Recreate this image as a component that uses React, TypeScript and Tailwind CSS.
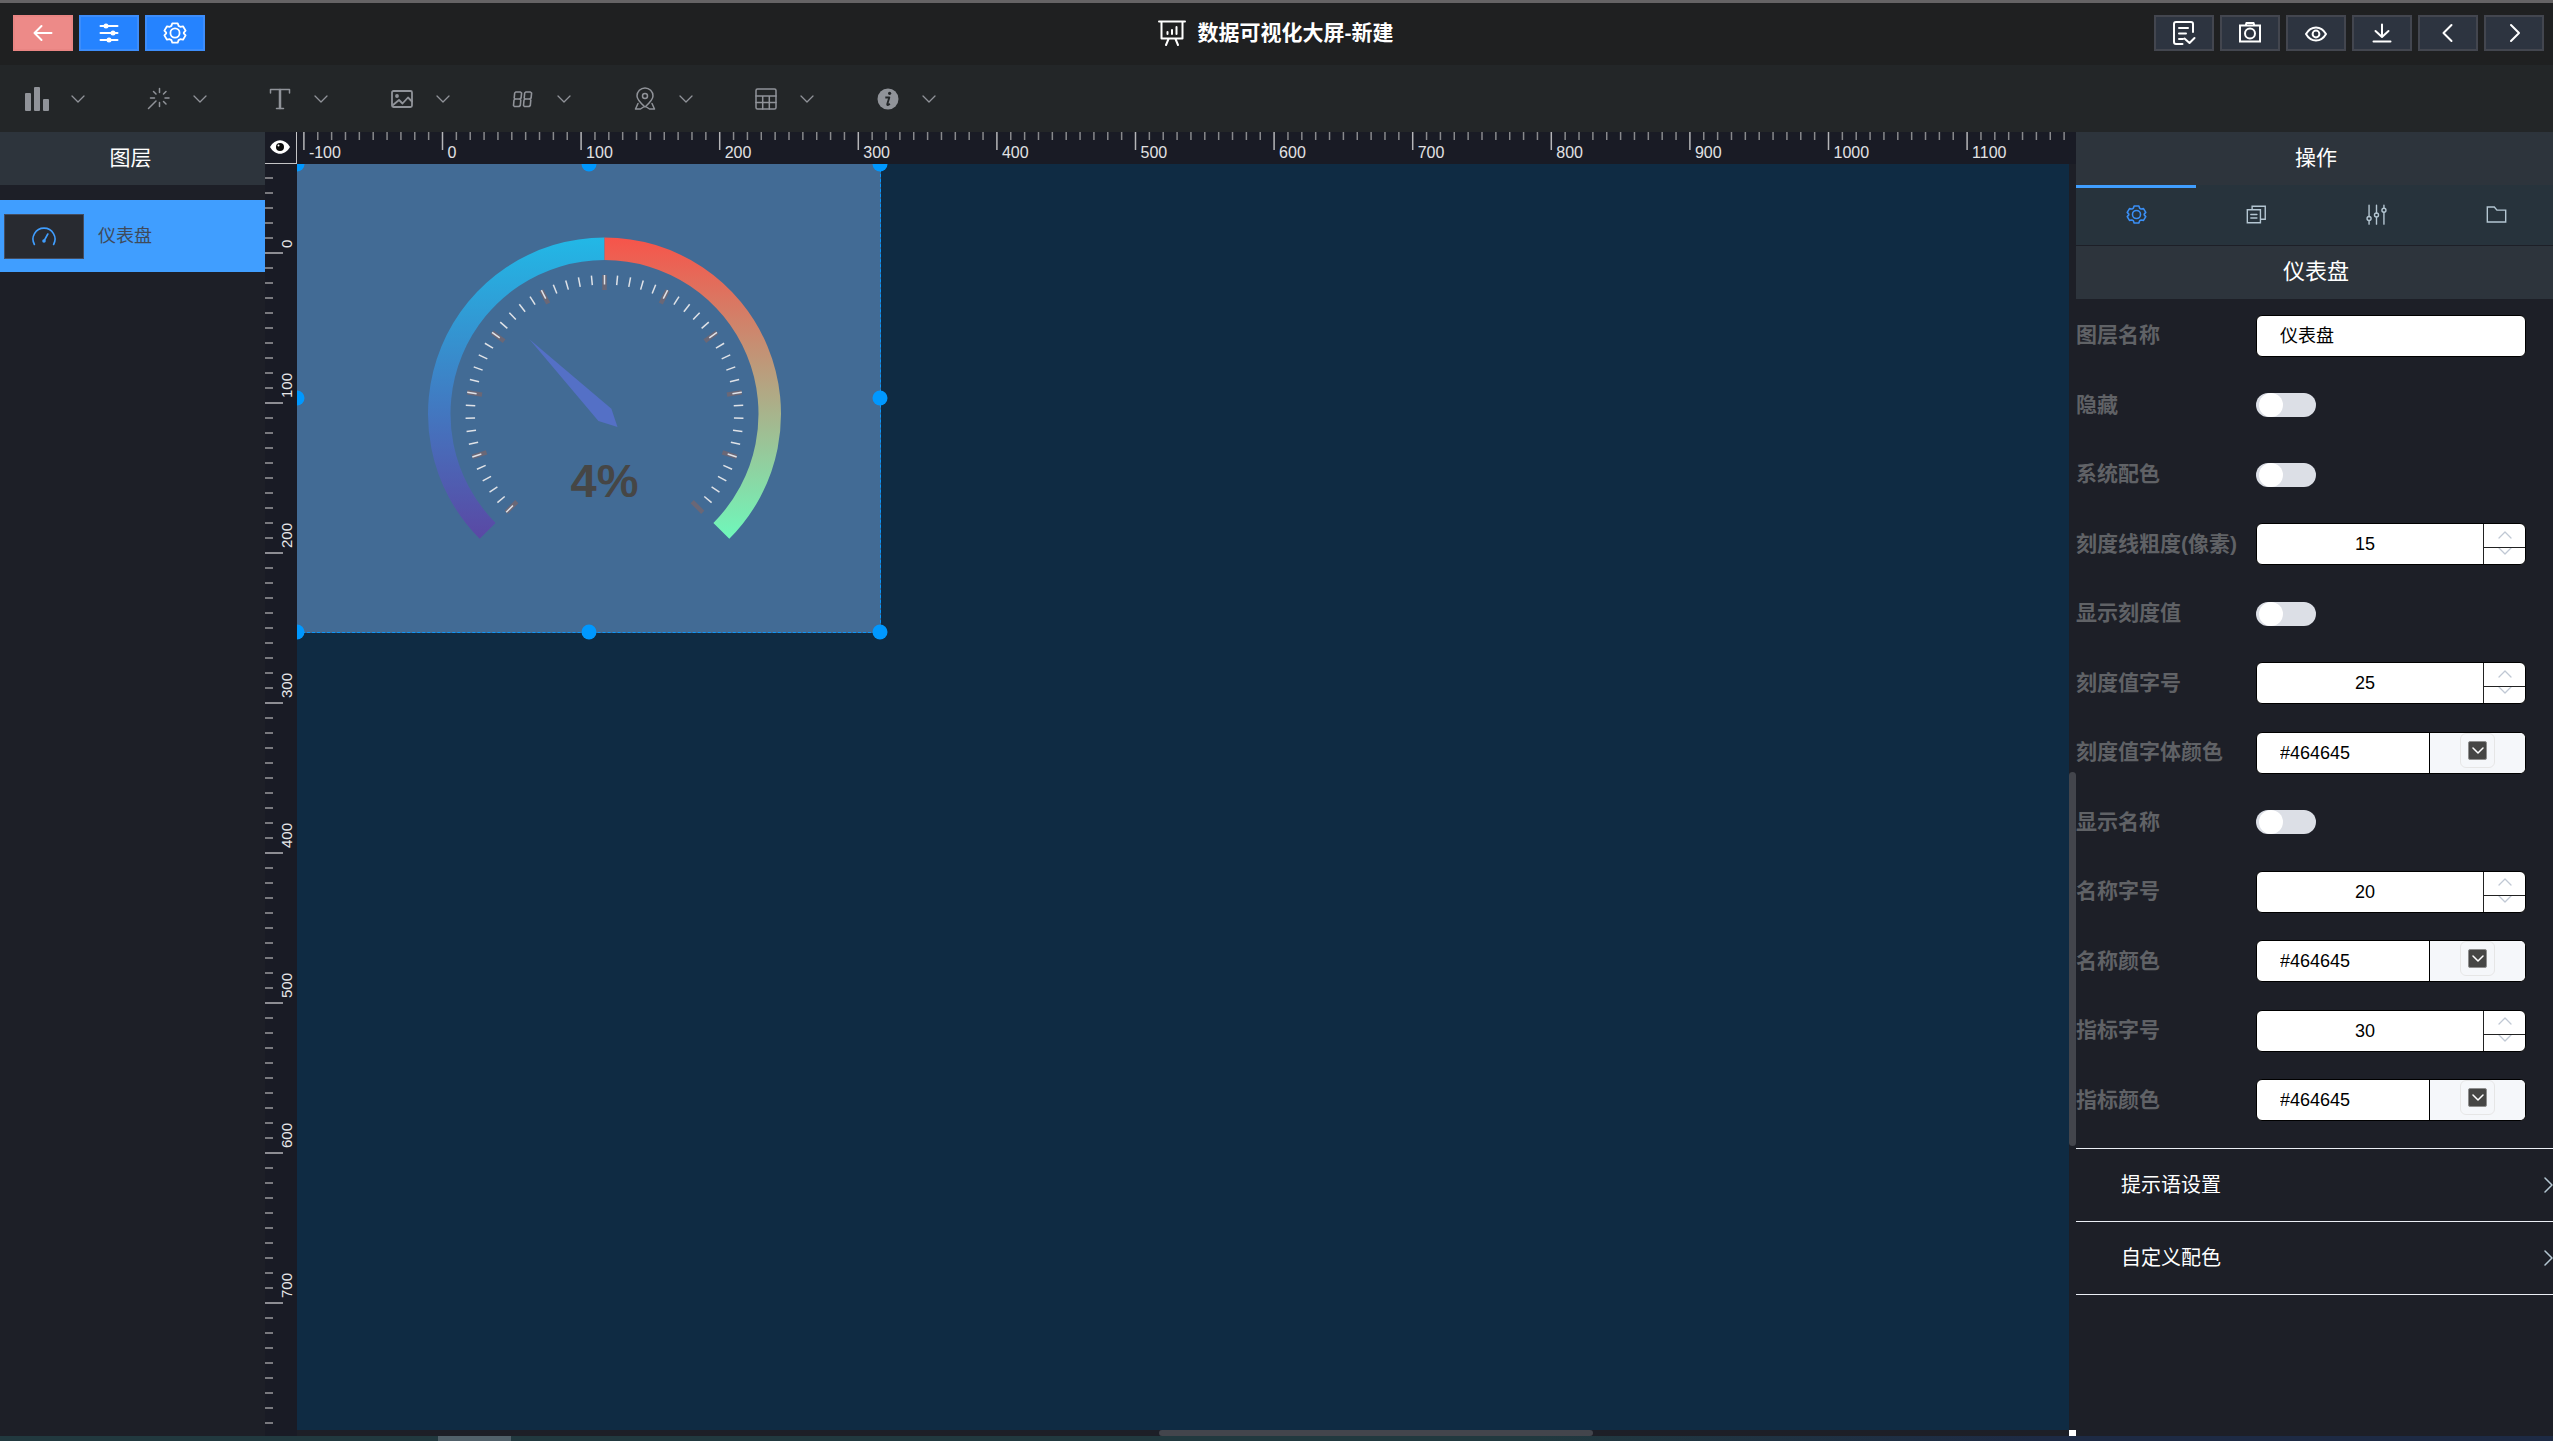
import React from "react";

const FONT = "font-['Liberation_Sans','Noto_Sans_CJK_SC',sans-serif]";

type IconProps = { className?: string; size?: number };

const stroke = {
  fill: "none",
  stroke: "currentColor",
  strokeLinecap: "round" as const,
  strokeLinejoin: "round" as const,
};

const Svg = ({ className = "", size = 24, w = 2, children }: { className?: string; size?: number; w?: number; children: React.ReactNode }) => (
  <svg className={className} width={size} height={size} viewBox="0 0 24 24" {...stroke} strokeWidth={w} aria-hidden="true">
    {children}
  </svg>
);

const BackIcon = () => <Svg><path d="M20.500 12H3.500M10.500 5L3.500 12l7 7" /></Svg>;

const OperationIcon = () => (
  <Svg>
    <path d="M3.500 5h17M3.500 12h17M3.500 19h17" />
    <g fill="currentColor" stroke="none">
      <circle cx="9" cy="5" r="2.500" />
      <circle cx="16" cy="12" r="2.500" />
      <circle cx="12" cy="19" r="2.500" />
    </g>
  </Svg>
);

const GearIcon = ({ className, size }: IconProps) => (
  <Svg className={className} size={size} w={1.8}>
    <path d="M9.300 2.300 L14.700 2.300 L15.600 4.900 L17.300 5.800 L20 5.300 L22.600 9.600 L20.800 11.600 L20.800 12.400 L22.600 14.400 L20 18.700 L17.300 18.200 L15.600 19.100 L14.700 21.700 L9.300 21.700 L8.400 19.100 L6.700 18.200 L4 18.700 L1.400 14.400 L3.200 12.400 L3.200 11.600 L1.400 9.600 L4 5.300 L6.700 5.800 L8.400 4.900 Z" />
    <circle cx="12" cy="12" r="4.600" />
  </Svg>
);

const BoardIcon = () => (
  <svg width="28" height="26" viewBox="0 0 28 26" {...stroke} strokeWidth="2" aria-hidden="true">
    <path d="M1 1.500h26M3.500 2v16.500h21V2M10.500 19l-2.500 6M17.500 19l2.500 6M9.500 12v2M14 10v4M18.500 7v7" />
  </svg>
);

const SaveIcon = () => (
  <Svg>
    <path d="M10.500 23H4a2 2 0 0 1-2-2V3a2 2 0 0 1 2-2h15a2 2 0 0 1 2 2v8M7 7h9M7 12.500h7M7 18h4M12.500 17.500l5 4.500 5-5" />
  </Svg>
);
const CameraIcon = () => (
  <Svg>
    <path d="M2 4.500h20v16H2zM7.500 4.500L8.500 2h7l1 2.500" strokeLinejoin="miter" />
    <circle cx="12" cy="12.500" r="5" />
  </Svg>
);
const ViewIcon = () => (
  <Svg>
    <path d="M2 13c2.500-4.300 6-6.500 10-6.500S19.500 8.700 22 13c-2.500 4.300-6 6.500-10 6.500S4.500 17.300 2 13z" />
    <circle cx="12" cy="13" r="3.400" />
  </Svg>
);
const DownloadIcon = () => <Svg><path d="M12 3.500v12M5.500 10l6.500 6 6.500-6M3.500 20.500h17" /></Svg>;
const PrevIcon = () => <Svg><path d="M15.500 4l-8 8 8 8" /></Svg>;
const NextIcon = () => <Svg><path d="M9 4l8 8-8 8" /></Svg>;

const BarsIcon = () => (
  <Svg>
    <g fill="currentColor" stroke="none">
      <rect x="0" y="6" width="6" height="18" rx="1" />
      <rect x="9" y="0" width="6" height="24" rx="1" />
      <rect x="18" y="12" width="6" height="12" rx="1" />
    </g>
  </Svg>
);
const WandIcon = () => (
  <Svg w={1.5}>
    <path d="M12.500 1.500v4M12.500 15.500v4M3.500 11h4M18 11h4M6.500 4.500l2.500 2.500M19 4.500l-2.500 2.500M16.500 14.500l2.500 2.500M9 14l-7.500 7.500" />
  </Svg>
);
const TextIcon = () => (
  <Svg w={1.5}>
    <path d="M2.500 6V2.500h19V6M12 2.500v19M8.500 21.500h7" />
    <path d="M12 3v18" strokeWidth="2.500" />
  </Svg>
);
const PictureIcon = () => (
  <Svg w={1.8}>
    <rect x="2" y="4" width="20" height="16" rx="1.500" />
    <circle cx="7" cy="9" r="1" fill="currentColor" />
    <path d="M3 18l6-5 3.500 3.500L18 10.500l4 4" />
  </Svg>
);
const DigitsIcon = () => (
  <Svg w={1.6}>
    <path d="M4.800 5h4.600l1.200 1-.5 5-1.300 1H4.200l-1-1 .5-5zM4.200 12h4.600l1 1-.5 5.500-1.300 1H3.500l-1-1 .5-5.500z" />
    <path d="M14.800 5h4.600l1.200 1-.5 5-1.300 1h-4.600l-1-1 .5-5zM14.200 12h4.600l1 1-.5 5.500-1.300 1h-4.500l-1-1 .5-5.500z" />
  </Svg>
);
const PinIcon = () => (
  <Svg w={1.5}>
    <path d="M12 20C7.500 16 4 12.500 4 9a8 8 0 0 1 16 0C20 12.500 16.500 16 12 20z" />
    <circle cx="12" cy="9" r="2.500" />
    <path d="M5 16.500L2.500 22h5l3-2M19 16.500l2.500 5.500h-5l-3-2" />
  </Svg>
);
const TableIcon = () => (
  <Svg w={1.5}>
    <rect x="2" y="2" width="20" height="20" rx="1.500" />
    <path d="M2 9h20M2 15.500h20M8.700 9v13M15.300 9v13" />
  </Svg>
);
const InfoIcon = () => (
  <svg width="24" height="24" viewBox="0 0 24 24" aria-hidden="true">
    <circle cx="12" cy="12" r="10.500" fill="currentColor" />
    <circle cx="13.600" cy="6.300" r="1.600" fill="#232628" />
    <path d="M9.300 10.500h4l-2 6.500c-.3 1.300.8 1.300 2.500-.3" fill="none" stroke="#232628" strokeWidth="1.900" strokeLinejoin="round" />
  </svg>
);

const ChevronDown = () => (
  <svg width="14" height="8" viewBox="0 0 14 8" {...stroke} strokeWidth="1.300" aria-hidden="true">
    <path d="M1 1l6 6 6-6" />
  </svg>
);

const CopyIcon = ({ size }: IconProps) => (
  <Svg size={size} w={1.6}>
    <path d="M1.500 6.500h15v15h-15zM7 6V2.500h15v15h-5M5.500 12h7M5.500 16h7" strokeLinejoin="miter" />
  </Svg>
);
const SlidersIcon = ({ size }: IconProps) => (
  <Svg size={size} w={1.6}>
    <path d="M3.500 1.500v13M3.500 19v4M12 1.500v9M12 15v8M20.500 1.500v3.500M20.500 9.500v13.500" />
    <circle cx="3.500" cy="16.500" r="2.300" />
    <circle cx="12" cy="12.500" r="2.300" />
    <circle cx="20.500" cy="7.200" r="2.300" />
  </Svg>
);
const FolderIcon = ({ size }: IconProps) => <Svg size={size} w={1.6}><path d="M1.500 3.500h8l3 3.500h10v13.500h-21z" strokeLinejoin="miter" /></Svg>;

const toolMenus = [
  { name: "图表", Icon: BarsIcon },
  { name: "特效", Icon: WandIcon },
  { name: "文本", Icon: TextIcon },
  { name: "图片", Icon: PictureIcon },
  { name: "数字", Icon: DigitsIcon },
  { name: "地图", Icon: PinIcon },
  { name: "表格", Icon: TableIcon },
  { name: "信息", Icon: InfoIcon },
];

const leftActions = [
  { name: "返回", Icon: BackIcon, tone: "bg-[#ed8a88] border-[#e98583]" },
  { name: "图层", Icon: OperationIcon, tone: "bg-[#2583ff] border-[#3d8dfa]" },
  { name: "设置", Icon: GearIcon, tone: "bg-[#2583ff] border-[#3d8dfa]" },
];
const rightActions = [
  { name: "保存", Icon: SaveIcon },
  { name: "截图", Icon: CameraIcon },
  { name: "预览", Icon: ViewIcon },
  { name: "导出", Icon: DownloadIcon },
  { name: "上一步", Icon: PrevIcon },
  { name: "下一步", Icon: NextIcon },
];

function Header() {
  return (
    <header className="flex h-[65px] items-start justify-between border-t-[3px] border-[#656365] bg-[#1f2021] pt-3 pr-[9px] pl-[13px] text-white">
      <div className="flex flex-1 gap-1.5">
        {leftActions.map(({ name, Icon, tone }) => (
          <button key={name} aria-label={name} className={`flex h-9 w-[60px] items-center justify-center border-2 ${tone}`}>
            <Icon />
          </button>
        ))}
      </div>
      <h1 className="flex h-9 items-center gap-3 pr-1.5 text-[21px] font-bold">
        <BoardIcon />
        <span>数据可视化大屏-新建</span>
      </h1>
      <div className="flex flex-1 justify-end gap-1.5">
        {rightActions.map(({ name, Icon }) => (
          <button key={name} aria-label={name} className="flex h-9 w-[60px] items-center justify-center border-2 border-[#43464f] bg-[#2d3440]">
            <Icon />
          </button>
        ))}
      </div>
    </header>
  );
}

function Toolbar() {
  return (
    <nav className="h-[67px] bg-[#232628] text-[#909399]">
      <div className="grid h-full w-[972px] grid-cols-8">
        {toolMenus.map(({ name, Icon }) => (
          <button key={name} aria-label={name} className="flex items-center gap-[22px] pl-[25px]">
            <Icon />
            <ChevronDown />
          </button>
        ))}
      </div>
    </nav>
  );
}

function Layers() {
  return (
    <aside className="w-[265px] shrink-0 bg-[#1d1f27]">
      <h2 className="flex h-[53px] items-center justify-center bg-[#2d343c] pr-1 pb-0.5 text-[21px] text-white">图层</h2>
      <button className="mt-[15px] flex h-[72px] w-full items-center gap-3.5 bg-[#409eff] pl-1 text-lg text-[#3f4a5a]">
        <span className="flex h-[45px] w-20 items-center justify-center border border-[#434c60] bg-[#282a30] text-[#409eff]">
          <Svg w={1.6}>
            <path d="M2.400 20.500A11 11 0 1 1 21.600 20.500M12 17l3.800-7" />
            <circle cx="12" cy="17" r="1" fill="currentColor" />
          </Svg>
        </span>
        仪表盘
      </button>
    </aside>
  );
}

const range = (from: number, to: number) => Array.from({ length: to - from + 1 }, (_, i) => from + i);

function RulerX() {
  const at = (v: number) => 145.5 + v * 1.386;
  return (
    <svg className="h-8 min-w-0 flex-1" aria-hidden="true">
      {range(-10, 117).map((n) => (
        <path key={n} d={`M${at(n * 10)} 0V${n % 10 === 0 ? 18 : 8}`} stroke={n % 10 === 0 ? "#b5b5b8" : "#88898c"} strokeWidth="1.500" />
      ))}
      {range(-1, 11).map((n) => (
        <text key={n} x={at(n * 100) + 5} y="26" fill="#e2e2e4" fontSize="16">{n * 100}</text>
      ))}
    </svg>
  );
}

function RulerY() {
  const at = (v: number) => 89 + v * 1.5;
  return (
    <svg className="h-full w-8 shrink-0" aria-hidden="true">
      {range(-5, 78).map((n) => (
        <path key={n} d={`M0 ${at(n * 10)}H${n % 10 === 0 ? 18 : 8}`} stroke={n % 10 === 0 ? "#b5b5b8" : "#9a9a9c"} strokeWidth="1.500" />
      ))}
      {range(0, 7).map((n) => (
        <text key={n} transform={`translate(27 ${at(n * 100) - 5}) rotate(-90)`} fill="#e8e8ea" fontSize="15">{n * 100}</text>
      ))}
    </svg>
  );
}

function polar(r: number, deg: number) {
  const a = (deg * Math.PI) / 180;
  return `${307.5 + r * Math.cos(a)} ${250 + r * Math.sin(a)}`;
}
const tick = (deg: number, inner: number, outer: number) => `M${polar(outer, deg)}L${polar(inner, deg)}`;

function Gauge() {
  return (
    <svg className="block" width="583" height="468" viewBox="0 0 583 468" role="img" aria-label="仪表盘 4%">
      <defs>
        <linearGradient id="cool" x1="0" y1="0" x2="0" y2="1">
          <stop offset="0" stopColor="#22b8e6" />
          <stop offset="1" stopColor="#5a48a4" />
        </linearGradient>
        <linearGradient id="warm" x1="0" y1="0" x2="0" y2="1">
          <stop offset="0" stopColor="#f7544a" />
          <stop offset="1" stopColor="#6ff8bb" />
        </linearGradient>
      </defs>
      <path d={`M${polar(176.5, 135)}A176.500 176.500 0 0 1 ${polar(176.5, 270)}L${polar(154, 270)}A154 154 0 0 0 ${polar(154, 135)}Z`} fill="url(#cool)" />
      <path d={`M${polar(176.5, 270)}A176.500 176.500 0 0 1 ${polar(176.5, 45)}L${polar(154, 45)}A154 154 0 0 0 ${polar(154, 270)}Z`} fill="url(#warm)" />
      {range(0, 10).map((i) => (
        <path key={i} d={tick(135 + i * 27, 124, 139)} stroke="#6a6776" strokeWidth="4.500" />
      ))}
      {range(0, 49).map((i) => (
        <path key={i} d={tick(135 + i * 5.4, 129.5, 139)} stroke="#dfe2e7" strokeWidth="1.500" />
      ))}
      <path d="M232.400 175.300L314.400 244.700L320.500 263L301.400 257Z" fill="#5470c6" />
      <text x="307.500" y="333" textAnchor="middle" fill="#464645" fontSize="47" fontWeight="bold">4%</text>
    </svg>
  );
}

const handles = [
  "left-0 top-0", "left-1/2 top-0", "left-full top-0",
  "left-0 top-1/2", "left-full top-1/2",
  "left-0 top-full", "left-1/2 top-full", "left-full top-full",
];

function Stage() {
  return (
    <main className="flex min-w-0 flex-1 flex-col bg-[#191b25]">
      <div className="flex h-8 shrink-0">
        <button aria-label="显示标尺" className="flex w-8 items-center justify-center border-r border-b border-[#c4c4c6] pr-0.5 pb-0.5 text-white">
          <svg width="22" height="16" viewBox="0 0 22 16" aria-hidden="true">
            <path d="M1 8C6-1 16-1 21 8 16 17 6 17 1 8z" fill="currentColor" />
            <circle cx="11" cy="8" r="4" fill="#0a0a0a" />
            <circle cx="9.500" cy="6.500" r="1" fill="#fff" />
          </svg>
        </button>
        <RulerX />
      </div>
      <div className="flex min-h-0 flex-1">
        <RulerY />
        <div className="flex min-w-0 flex-1 flex-col bg-[#1d1f27]">
          <div className="flex min-h-0 flex-1">
            <div className="relative min-w-0 flex-1 overflow-hidden bg-[#0f2b43]">
              <div className="relative w-[584px] border-r border-b border-dashed border-[#0a95fa] bg-[#426b95]">
                <Gauge />
                {handles.map((place) => (
                  <span key={place} className={`absolute size-[15px] -translate-1/2 rounded-full bg-[#0098ff] ${place}`} />
                ))}
              </div>
            </div>
            <div className="flex w-[7px] flex-col">
              <div className="mt-[608px] h-[374px] rounded-full bg-[#43454c]" />
            </div>
          </div>
          <div className="flex h-1.5 justify-between">
            <div className="ml-[862px] w-[434px] rounded-full bg-[#43454c]" />
            <div className="w-[7px] bg-white" />
          </div>
        </div>
      </div>
    </main>
  );
}

type Field = { id: string; label: string; kind: "text" | "switch" | "number" | "color"; value?: string };
const fields: Field[] = [
  { id: "layer", label: "图层名称", kind: "text", value: "仪表盘" },
  { id: "hidden", label: "隐藏", kind: "switch" },
  { id: "scheme", label: "系统配色", kind: "switch" },
  { id: "tickWidth", label: "刻度线粗度(像素)", kind: "number", value: "15" },
  { id: "showTick", label: "显示刻度值", kind: "switch" },
  { id: "tickSize", label: "刻度值字号", kind: "number", value: "25" },
  { id: "tickColor", label: "刻度值字体颜色", kind: "color", value: "#464645" },
  { id: "showName", label: "显示名称", kind: "switch" },
  { id: "nameSize", label: "名称字号", kind: "number", value: "20" },
  { id: "nameColor", label: "名称颜色", kind: "color", value: "#464645" },
  { id: "valueSize", label: "指标字号", kind: "number", value: "30" },
  { id: "valueColor", label: "指标颜色", kind: "color", value: "#464645" },
];

function Control({ id, kind, value }: Field) {
  if (kind === "switch") {
    return (
      <input
        id={id}
        type="checkbox"
        role="switch"
        className="h-6 w-[60px] appearance-none rounded-full bg-[#dcdfe6] px-[3px] before:block before:size-6 before:rounded-full before:bg-white checked:bg-[#409eff]"
      />
    );
  }
  return (
    <div className="flex h-[42px] w-[270px] overflow-hidden rounded-md border border-black bg-white text-lg text-black">
      <input
        id={id}
        defaultValue={value}
        className={`min-w-0 flex-1 outline-none ${kind === "number" ? "pr-2.5 text-center" : "pl-[23px]"}`}
      />
      {kind === "number" && (
        <div className="flex w-[42px] flex-col border-l border-[#222] text-[#c0c8d4]">
          <button type="button" aria-label="增加" className="flex h-6 items-center justify-center border-b border-[#222] pb-0.5">
            <svg width="14" height="8" viewBox="0 0 14 8" {...stroke} strokeWidth="1.300" aria-hidden="true"><path d="M1 7l6-6 6 6" /></svg>
          </button>
          <button type="button" aria-label="减少" className="flex flex-1 items-start justify-center">
            <svg width="14" height="8" viewBox="0 0 14 8" {...stroke} strokeWidth="1.300" aria-hidden="true"><path d="M1 0l6 6 6-6" /></svg>
          </button>
        </div>
      )}
      {kind === "color" && (
        <div className="flex w-24 items-start justify-center border-l border-black bg-[#f5f7fa]">
          <button type="button" aria-label="选择颜色" className="flex h-[35px] w-[35px] items-center justify-center rounded-md border border-[#e6e6e6]">
            <span className="flex size-[19px] items-center justify-center rounded-xs border border-[#8e8e8e] bg-[#464645] text-white">
              <svg width="12" height="7" viewBox="0 0 12 7" {...stroke} strokeWidth="1.500" aria-hidden="true"><path d="M1 1l5 5 5-5" /></svg>
            </span>
          </button>
        </div>
      )}
    </div>
  );
}

const tabs = [
  { name: "配置", Icon: GearIcon },
  { name: "数据", Icon: CopyIcon },
  { name: "交互", Icon: SlidersIcon },
  { name: "文件", Icon: FolderIcon },
];

function Panel() {
  return (
    <aside className="w-[477px] shrink-0 overflow-hidden bg-[#1d1f27]">
      <div className="w-[480px]">
        <h2 className="flex h-[53px] items-center justify-center bg-[#2d343c] pb-0.5 text-[21px] text-white">操作</h2>
        <div role="tablist" className="grid h-[61px] grid-cols-4 border-b border-[#1d1f27] bg-[#27333c]">
          {tabs.map(({ name, Icon }, i) => (
            <button
              key={name}
              role="tab"
              aria-label={name}
              aria-selected={i === 0}
              className={`flex items-center justify-center border-t-[3px] pb-1 ${i === 0 ? "border-[#409eff] text-[#3a8ff5]" : "border-transparent text-[#b4c6d2]"}`}
            >
              <Icon size={21} />
            </button>
          ))}
        </div>
        <h3 className="flex h-[53px] items-center justify-center bg-[#2d343c] pb-0.5 text-[22px] text-white">仪表盘</h3>
        <form className="mt-0.5 flex h-[834px] flex-col">
          {fields.map((f) => (
            <div key={f.id} className="flex flex-1 items-center">
              <label htmlFor={f.id} className="w-[180px] pb-0.5 text-[21px] font-bold whitespace-nowrap text-[#606266]">{f.label}</label>
              <Control {...f} />
            </div>
          ))}
        </form>
        <div className="mt-[13px] border-b border-[#ebeef5]">
          {["提示语设置", "自定义配色"].map((t) => (
            <button key={t} className="flex h-[73px] w-full items-center justify-between border-t border-[#ebeef5] pl-[45px] text-xl text-white">
              {t}
              <svg className="text-[#b4c6d2]" width="12" height="16" viewBox="0 0 12 16" {...stroke} strokeWidth="1.500" aria-hidden="true"><path d="M1 1l7 7-7 7" /></svg>
            </button>
          ))}
        </div>
      </div>
    </aside>
  );
}

export default function App() {
  return (
    <div className={`flex h-screen flex-col overflow-hidden bg-[#1d1f27] ${FONT}`}>
      <Header />
      <Toolbar />
      <div className="flex min-h-0 flex-1">
        <Layers />
        <Stage />
        <Panel />
      </div>
      <div className="h-[5px] shrink-0 bg-linear-to-r from-[#21393f] from-60% to-[#1d2a44] to-80%">
        <div className="ml-[438px] h-full w-[73px] bg-[#51616a]" />
      </div>
    </div>
  );
}
